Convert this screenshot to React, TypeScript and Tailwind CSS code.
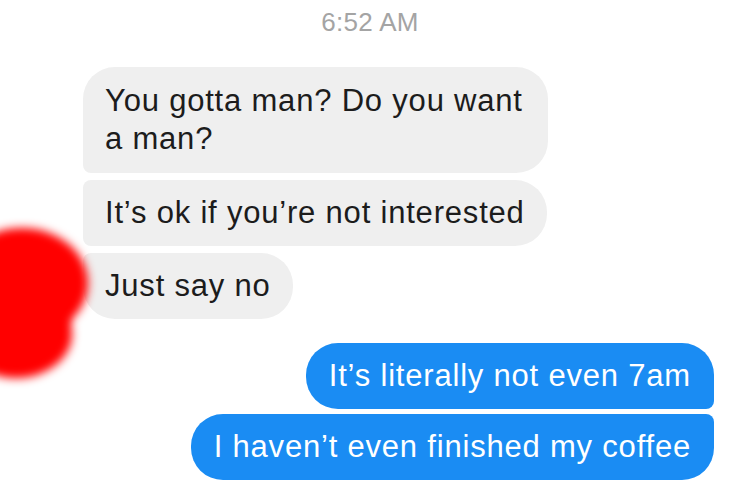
const incoming = [
  { text: "You gotta man? Do you want a man?", corners: "rounded-[32px] rounded-bl-[8px]", box: "w-[465px] py-[15px]" },
  { text: "It’s ok if you’re not interested", corners: "rounded-r-[32px] rounded-l-[8px]", box: "w-fit py-[14px]" },
  { text: "Just say no", corners: "rounded-[32px] rounded-tl-[8px]", box: "w-fit py-[14px]" },
];

const outgoing = [
  { text: "It’s literally not even 7am", corners: "rounded-[32px] rounded-br-[8px]" },
  { text: "I haven’t even finished my coffee", corners: "rounded-[32px] rounded-tr-[8px]" },
];

export default function App() {
  return (
    <div className="relative h-[500px] w-[740px] overflow-hidden bg-white font-['Liberation_Sans',Arial,sans-serif]">
      {/* scribbled-out avatar */}
      <div className="absolute left-[-44px] top-[228px] h-[110px] w-[132px] rounded-[50%] bg-[#ff0000] blur-[5px]" />
      <div className="absolute left-[-40px] top-[290px] h-[88px] w-[112px] rounded-[50%] bg-[#ff0000] blur-[5px]" />

      <div className="flex flex-col px-[26px] pt-[6px]">
        <div className="text-center text-[26px] leading-[32px] tracking-[0.3px] text-[#a4a4a4]">6:52 AM</div>

        <div className="mt-[29px] flex flex-col gap-[7px] pl-[57px]">
          {incoming.map((m) => (
            <div
              key={m.text}
              className={`${m.box} ${m.corners} bg-[#efefef] px-[22px] text-[31px] leading-[38px] tracking-[0.8px] text-[#1c1c1c]`}
            >
              {m.text}
            </div>
          ))}
        </div>

        <div className="mt-[24px] flex flex-col items-end gap-[5px]">
          {outgoing.map((m) => (
            <div
              key={m.text}
              className={`${m.corners} bg-[#1a8cf3] px-[23px] py-[14px] text-[31px] leading-[38px] tracking-[0.8px] text-white`}
            >
              {m.text}
            </div>
          ))}
        </div>
      </div>
    </div>
  );
}
